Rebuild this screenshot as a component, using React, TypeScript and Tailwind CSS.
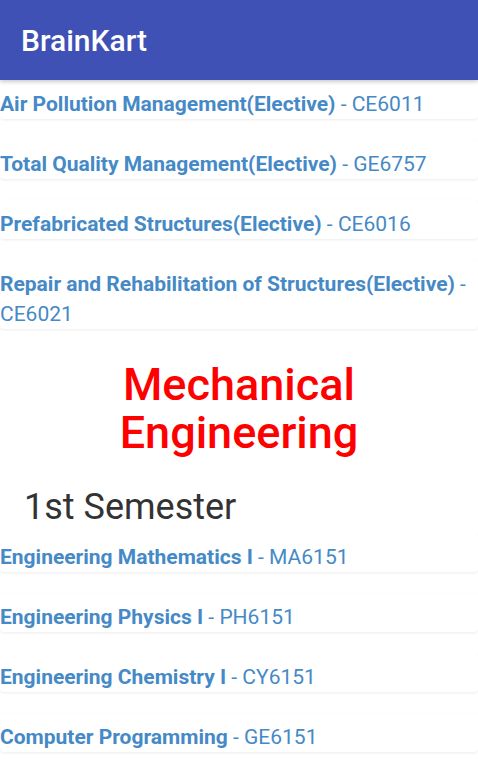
type Subject = {
    name: string,
    code: string
}

const civil: Subject[] = [
    {name: "Air Pollution Management(Elective)", code: "CE6011"},
    {name: "Total Quality Management(Elective)", code: "GE6757"},
    {name: "Prefabricated Structures(Elective)", code: "CE6016"},
    {name: "Repair and Rehabilitation of Structures(Elective)", code: "CE6021"},
]

const firstSem: Subject[] = [
    {name: "Engineering Mathematics I", code: "MA6151"},
    {name: "Engineering Physics I", code: "PH6151"},
    {name: "Engineering Chemistry I", code: "CY6151"},
    {name: "Computer Programming", code: "GE6151"},
]

const SubjectCard = ({name, code}: Subject) => {
    return (
        <div className="bg-white rounded-[4px] pt-[9px] mb-[21px] text-[21px] leading-[30px] text-[#4589c6] shadow-[0_1px_3px_rgba(0,0,0,0.08)]">
            <a className="font-bold">{name}</a> - {code}
        </div>
    )
}

export default function App() {
    return (
        <div className="min-h-screen bg-white font-['Roboto',sans-serif]">
            <header className="h-[80px] bg-[#3f51b5] flex items-center px-[21px] shadow-[0_2px_4px_rgba(0,0,0,0.2)] relative z-10">
                <h1 className="text-white text-[30px] font-medium">BrainKart</h1>
            </header>
            <div>
                {civil.map((s) => <SubjectCard key={s.code} {...s}/>)}
                <h2 className="mt-[32px] text-center text-[#ff0000] text-[45px] leading-[48px] font-medium">
                    Mechanical<br/>Engineering
                </h2>
                <h3 className="mt-[30px] mb-[6px] pl-[24px] text-[#333333] text-[36px] leading-[40px]">1st Semester</h3>
                {firstSem.map((s) => <SubjectCard key={s.code} {...s}/>)}
            </div>
        </div>
    )
}
